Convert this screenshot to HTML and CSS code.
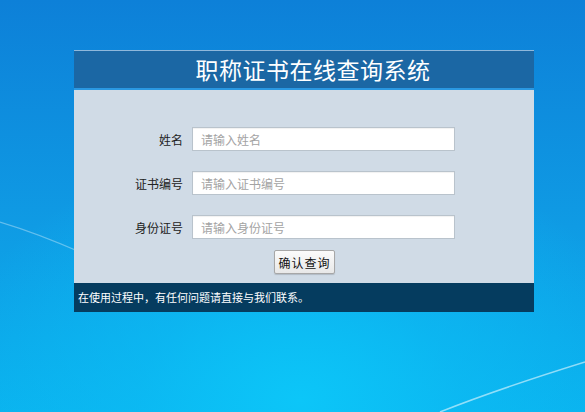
FILE: index.html
```html
<!DOCTYPE html>
<html lang="zh-CN">
<head>
  <meta charset="UTF-8" />
  <meta name="viewport" content="width=device-width, initial-scale=1.0"/>
  <title>职称证书在线查询系统</title>
  <link rel="stylesheet" href="styles.css">
</head>
<body>
  <svg class="streaks" width="585" height="412" viewBox="0 0 585 412">
    <path d="M0 222 C 30 231, 55 241, 80 252" stroke="rgba(255,255,255,0.35)" stroke-width="1.2" fill="none"/>
    <path d="M440 412 C 490 392, 540 376, 585 362" stroke="rgba(255,255,255,0.55)" stroke-width="1.5" fill="none"/>
  </svg>

  <div class="panel">
    <div class="panel-head">
      <h1>职称证书在线查询系统</h1>
    </div>
    <form class="panel-body" onsubmit="return false;">
      <div class="row">
        <label for="name">姓名</label>
        <input type="text" id="name" placeholder="请输入姓名" />
      </div>
      <div class="row">
        <label for="certNo">证书编号</label>
        <input type="text" id="certNo" placeholder="请输入证书编号" />
      </div>
      <div class="row">
        <label for="idNo">身份证号</label>
        <input type="text" id="idNo" placeholder="请输入身份证号" />
      </div>
      <div class="actions">
        <button type="submit">确认查询</button>
      </div>
    </form>
    <div class="panel-foot">在使用过程中，有任何问题请直接与我们联系。</div>
  </div>
</body>
</html>
```

FILE: styles.css
```css
html, body {
  height: 100%;
}

body {
  margin: 0;
  padding: 0;
  font-family: "Noto Sans CJK SC", "Noto Sans", sans-serif;
  background-color: #0b86dc;
  background-image:
    radial-gradient(ellipse 360px 260px at 300px 400px, #0cc6f8 0%, rgba(12,190,245,0.6) 45%, rgba(12,170,235,0) 100%),
    linear-gradient(180deg, #0d80d8 0%, #0f9be4 55%, #0ab2ee 100%);
  overflow: hidden;
}

.streaks {
  position: absolute;
  top: 0; left: 0;
  z-index: 0;
}

.panel {
  position: relative;
  z-index: 1;
  width: 460px;
  margin: 50px 0 0 74px;
}

.panel-head {
  height: 37px;
  background: #1b67a4;
  border-top: 1px solid #8fb8dc;
  border-bottom: 2px solid #2a98e2;
  box-sizing: content-box;
  display: flex;
  align-items: center;
  justify-content: center;
  padding-left: 18px;
}

.panel-head h1 {
  margin: 0;
  color: #fff;
  font-size: 23px;
  font-weight: 400;
  line-height: 1;
  letter-spacing: 0.5px;
}

.panel-body {
  background: #d0dbe6;
  margin: 0;
  padding: 37px 0 9px 0;
  display: flex;
  flex-direction: column;
  gap: 20px;
}

.row {
  display: flex;
  align-items: center;
  gap: 9px;
}

.row label {
  width: 109px;
  text-align: right;
  font-size: 12px;
  color: #222;
}

.row input {
  width: 263px;
  height: 24px;
  box-sizing: border-box;
  border: 1px solid #b9c3cc;
  box-shadow: inset 0 1px 1px rgba(0,0,0,0.06);
  background: #fff;
  padding: 0 8px;
  font-family: inherit;
  font-size: 12px;
  outline: none;
}

.row input::placeholder {
  color: #a3a3a3;
}

.actions {
  display: flex;
  justify-content: center;
  margin-top: -9px;
  padding-left: 1px;
}

.actions button {
  width: 61px;
  height: 24px;
  font-family: inherit;
  font-size: 12px;
  color: #111;
  letter-spacing: 1px;
  background: linear-gradient(180deg, #fbfbfb 0%, #e8e8e8 100%);
  border: 1px solid #a7a7a7;
  border-radius: 2px;
  box-shadow: 0 1px 1px rgba(0,0,0,0.15);
  cursor: pointer;
  padding: 0;
}

.panel-foot {
  background: #053c5f;
  color: #fff;
  height: 29px;
  line-height: 29px;
  font-size: 11px;
  padding-left: 4px;
}
```
